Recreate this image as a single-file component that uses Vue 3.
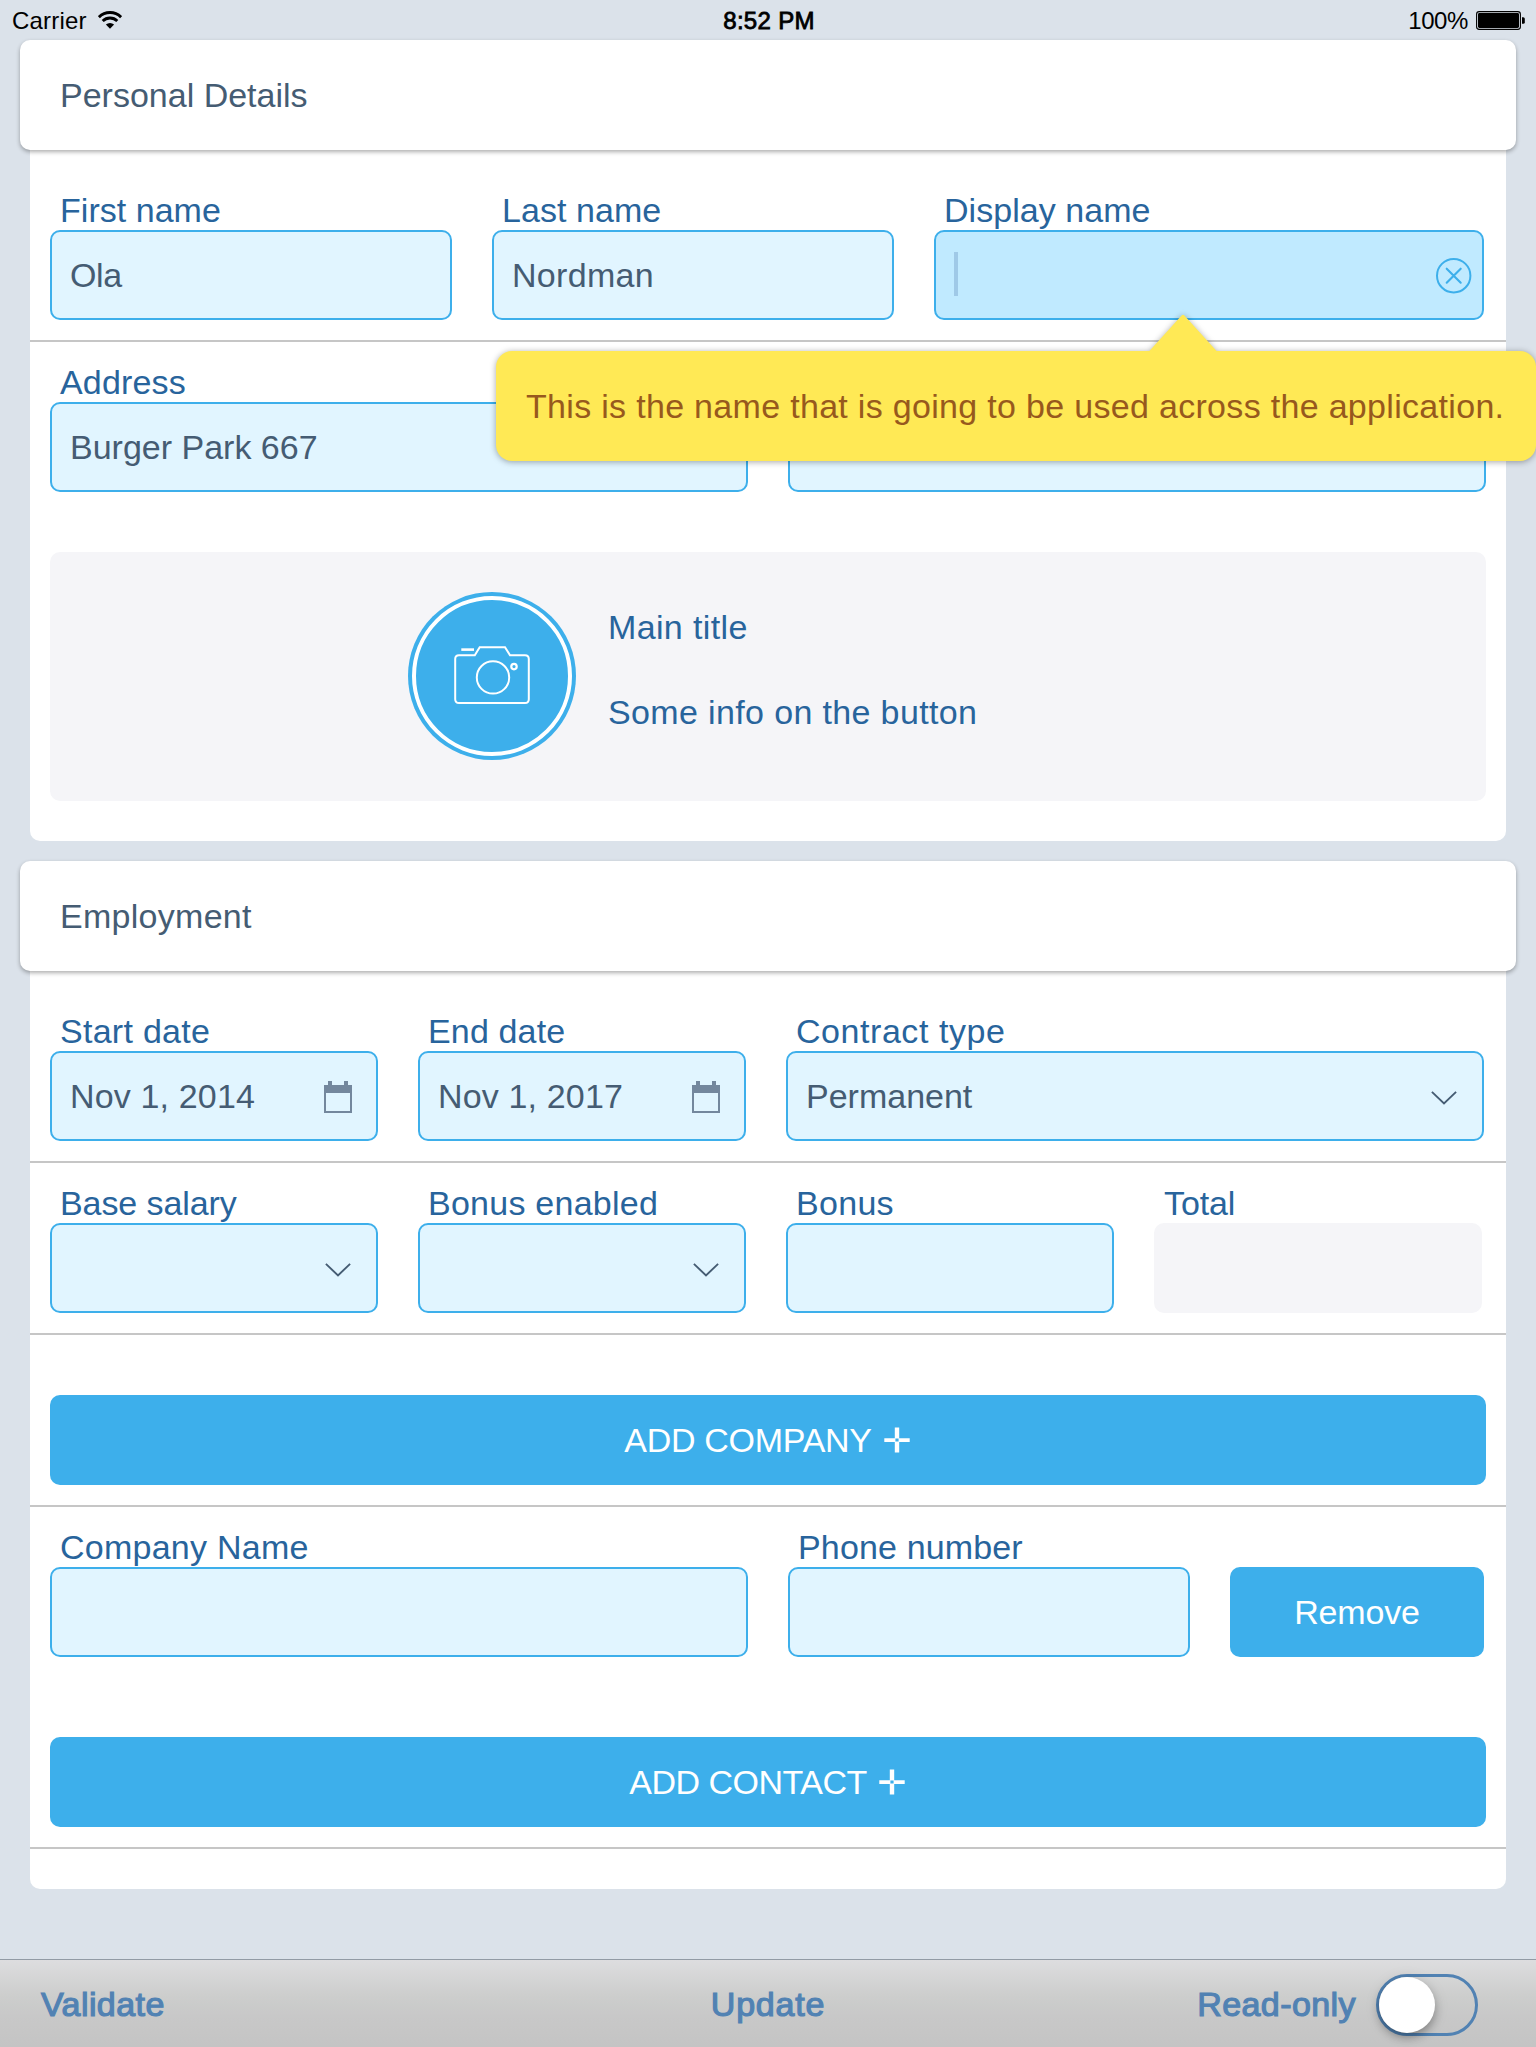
<script setup>
import { ref } from 'vue'

// ls / vls: tracking in px for a label and for its value
const sections = ref([
  {
    title: 'Personal Details',
    ls: 0,
    rows: [
      {
        divider: true,
        items: [
          { label: 'First name', ls: 0.03, value: 'Ola', vls: -0.4, width: 402 },
          { label: 'Last name', ls: 0.05, value: 'Nordman', vls: 0.3, width: 402 },
          {
            label: 'Display name',
            ls: 0.04,
            active: true,
            width: 550,
            tip: 'This is the name that is going to be used across the application.',
          },
        ],
      },
      {
        items: [
          { label: 'Address', value: 'Burger Park 667', vls: 0, width: 698 },
          { label: '', value: '', width: 698 },
        ],
      },
    ],
    picture: { title: 'Main title', info: 'Some info on the button' },
  },
  {
    title: 'Employment',
    ls: 0.28,
    rows: [
      {
        divider: true,
        items: [
          { label: 'Start date', ls: 0.28, value: 'Nov 1, 2014', icon: 'calendar', width: 328 },
          { label: 'End date', value: 'Nov 1, 2017', icon: 'calendar', width: 328 },
          { label: 'Contract type', ls: 0.55, value: 'Permanent', vls: 0, icon: 'chevron', width: 698 },
        ],
      },
      {
        divider: true,
        items: [
          { label: 'Base salary', ls: -0.08, icon: 'chevron', width: 328 },
          { label: 'Bonus enabled', ls: 0.25, icon: 'chevron', width: 328 },
          { label: 'Bonus', ls: 0.3, width: 328 },
          { label: 'Total', ls: -0.1, disabled: true, width: 328 },
        ],
      },
      { divider: true, items: [{ button: 'ADD COMPANY', ls: -0.3, plus: true, width: 1436 }] },
      {
        items: [
          { label: 'Company Name', ls: 0.25, width: 698 },
          { label: 'Phone number', width: 402 },
          { button: 'Remove', ls: -0.15, width: 254 },
        ],
      },
      { divider: true, items: [{ button: 'ADD CONTACT', ls: -0.5, plus: true, width: 1436 }] },
    ],
  },
])

const tracking = (v) => ({ letterSpacing: (v ?? 0.15) + 'px' })
</script>

<template>
  <div class="screen">
    <header class="status">
      <div class="status-side">
        <span>Carrier</span>
        <svg class="wifi" width="24" height="18" viewBox="0 0 24 18">
          <path d="M0.9 6.1 A15.8 15.8 0 0 1 23.1 6.1" fill="none" stroke="#000" stroke-width="2.9" />
          <path d="M4.7 10 A10.4 10.4 0 0 1 19.3 10" fill="none" stroke="#000" stroke-width="2.9" />
          <path d="M12 17.8 L7.9 13.6 A5.9 5.9 0 0 1 16.1 13.6 Z" fill="#000" />
        </svg>
      </div>
      <span class="clock">8:52 PM</span>
      <div class="status-side status-right">
        <span class="percent">100%</span>
        <svg class="battery" width="50" height="19" viewBox="0 0 50 19">
          <rect x="0.6" y="0.6" width="43.8" height="17.8" rx="2.6" fill="none" stroke="#000" stroke-width="1.1" />
          <rect x="2" y="2" width="41" height="15" rx="1.4" fill="#000" />
          <path d="M46 6.2 h1.2 a1.6 1.6 0 0 1 1.6 1.6 v3.4 a1.6 1.6 0 0 1 -1.6 1.6 h-1.2 z" fill="#000" />
        </svg>
      </div>
    </header>

    <section v-for="section in sections" :key="section.title" class="section">
      <h2 class="section-head" :style="tracking(section.ls)">{{ section.title }}</h2>
      <div class="section-body">
        <div v-for="(row, r) in section.rows" :key="r" class="row" :class="{ divider: row.divider }">
          <div v-for="(item, i) in row.items" :key="i" class="item" :style="{ width: item.width + 'px' }">
            <button v-if="item.button" class="action">
              <span :style="tracking(item.ls)">{{ item.button }}</span>
              <svg v-if="item.plus" class="plus" width="26" height="26" viewBox="0 0 26 26">
                <path d="M10.8 0.5 h4.4 v10.7 h10.5 v3.7 h-10.5 v10.6 h-4.4 v-10.6 h-10.5 v-3.7 h10.5z M11.4 11.6 v2.8 h3.2 v-2.8z" fill="#fff" fill-rule="evenodd" />
              </svg>
            </button>
            <template v-else>
              <label class="label" :style="tracking(item.ls)">{{ item.label }}</label>
              <div class="field" :class="{ active: item.active, disabled: item.disabled }">
                <i v-if="item.active" class="caret"></i>
                <span class="value" :style="tracking(item.vls)">{{ item.value }}</span>
                <svg v-if="item.icon === 'calendar'" class="icon calendar" width="28" height="32" viewBox="0 0 28 32">
                  <path d="M4 0h4v4h12v-4h4v4h4v28h-28v-28h4z M2 12v18h24v-18z" fill="#73879d" fill-rule="evenodd" />
                </svg>
                <svg v-if="item.icon === 'chevron'" class="icon chevron" width="28" height="16" viewBox="0 0 28 16">
                  <path d="M1.9 1.9 L14 13.4 L26.1 1.9" fill="none" stroke="#455c73" stroke-width="1.9" />
                </svg>
                <svg v-if="item.active" class="clear" width="36" height="36" viewBox="0 0 36 36">
                  <circle cx="17.7" cy="17.7" r="16.7" fill="none" stroke="#3dafeb" stroke-width="2" />
                  <path d="M10.7 10.7 L24.7 24.7 M24.7 10.7 L10.7 24.7" stroke="#3dafeb" stroke-width="2.1" stroke-linecap="round" />
                </svg>
                <div v-if="item.tip" class="tip">
                  <svg class="tip-arrow" width="70" height="39" viewBox="0 0 70 39">
                    <path d="M0.5 39 L33.6 2.6 Q35 1 36.4 2.6 L69.5 39 Z" fill="#ffe955" />
                  </svg>
                  <span>{{ item.tip }}</span>
                </div>
              </div>
            </template>
          </div>
        </div>

        <div v-if="section.picture" class="picture">
          <div class="ring">
            <svg width="78" height="60" viewBox="0 0 78 60" fill="none" stroke="#fff" stroke-width="2">
              <path d="M6 9.2 H21.8 L26.7 1.2 H52 L57 9.2 H72 Q75.8 9.2 75.8 13 V53.2 Q75.8 57 72 57 H6 Q2.2 57 2.2 53.2 V13 Q2.2 9.2 6 9.2 Z" />
              <path d="M8.3 3.6 H21" stroke-width="2.6" />
              <circle cx="40" cy="31.4" r="16.2" />
              <circle cx="61" cy="20.6" r="2.7" stroke-width="2.2" />
            </svg>
          </div>
          <div class="picture-text">
            <p>{{ section.picture.title }}</p>
            <p>{{ section.picture.info }}</p>
          </div>
        </div>
      </div>
    </section>

    <footer class="toolbar">
      <span class="tool">Validate</span>
      <span class="tool tool-center">Update</span>
      <div class="tool-right">
        <span class="tool">Read-only</span>
        <div class="switch"><i class="knob"></i></div>
      </div>
    </footer>
  </div>
</template>

<style>
html,
body {
  margin: 0;
  background: #dbe2ea;
  overflow: hidden;
}
</style>

<style scoped>
.screen {
  width: 1536px;
  height: 2047px;
  display: flex;
  flex-direction: column;
  background: #dbe2ea;
  overflow: hidden;
  font-family: "Liberation Sans", Arial, sans-serif;
  font-size: 34px;
  line-height: 38px;
  letter-spacing: 0.15px;
  color: #455c73;
}

.status {
  height: 40px;
  display: grid;
  grid-template-columns: 1fr auto 1fr;
  font-size: 24px;
  line-height: 28px;
  letter-spacing: 0.2px;
  color: #000;
  padding: 7px 10px 0 12px;
  box-sizing: border-box;
}
.status-side { display: flex; }
.status-right { justify-content: flex-end; }
.wifi { margin: 4px 0 0 11px; }
.battery { margin: 4px 0 0 8px; }
.percent { letter-spacing: -0.4px; }
.clock { -webkit-text-stroke: 0.8px #000; letter-spacing: 0.3px; }

.section { padding: 0 20px; margin-bottom: 20px; }
.section-head {
  position: relative;
  margin: 0;
  height: 110px;
  padding: 0 40px;
  display: flex;
  align-items: center;
  background: #fff;
  border-radius: 10px;
  box-shadow: 0 2px 4px rgba(0, 0, 0, 0.32);
  font-size: 34px;
  font-weight: 400;
}
.section-body {
  margin: 0 10px;
  padding: 20px 0 40px;
  background: #fff;
  border-radius: 0 0 10px 10px;
}
.row {
  display: flex;
  gap: 40px;
  padding: 21px 20px 20px;
}
.row.divider { border-bottom: 2px solid #c6c6c6; }
.item {
  flex: none;
  height: 129px;
  display: flex;
  flex-direction: column;
  justify-content: flex-end;
}
.label {
  height: 39px;
  padding-left: 10px;
  color: #28649c;
  white-space: nowrap;
}
.field {
  position: relative;
  box-sizing: border-box;
  height: 90px;
  padding: 0 0 0 18px;
  display: flex;
  align-items: center;
  border: 2px solid #3dafeb;
  border-radius: 10px;
  background: #e1f5ff;
}
.field.active { background: #c0eaff; }
.field.disabled { border-color: #f5f5f8; background: #f5f5f8; }
.value { flex: 1; }
.icon { margin-right: 24px; }
.calendar { margin-top: 2px; }
.chevron { margin-top: 3px; }
.clear { margin: 2px 10px 0 0; }
.caret {
  width: 4px;
  height: 44px;
  margin-top: -2px;
  background: #9fc9e7;
}

.tip {
  position: absolute;
  z-index: 5;
  right: -54px;
  top: 119px;
  width: 1040px;
  height: 110px;
  display: flex;
  align-items: center;
  box-sizing: border-box;
  padding-left: 30px;
  background: #ffe955;
  border-radius: 16px;
  color: #97591d;
  white-space: nowrap;
  letter-spacing: 0.31px;
  filter: drop-shadow(0 1px 3px rgba(0, 0, 0, 0.35));
}
.tip-arrow {
  position: absolute;
  left: 652px;
  top: -38px;
}

.action {
  height: 90px;
  width: 100%;
  padding: 0;
  display: flex;
  align-items: center;
  justify-content: center;
  gap: 12px;
  border: 0;
  border-radius: 10px;
  background: #3dafeb;
  color: #fff;
  font: inherit;
}
.plus { margin-right: 2px; }

.picture {
  height: 249px;
  margin: 40px 20px 0;
  box-sizing: border-box;
  padding: 40px 0 0 358px;
  display: flex;
  background: #f5f5f8;
  border-radius: 10px;
}
.ring {
  width: 152px;
  height: 152px;
  display: flex;
  align-items: center;
  justify-content: center;
  background: #3dafeb;
  border: 4px solid #fff;
  border-radius: 50%;
  margin: 4px;
  box-shadow: 0 0 0 4px #3dafeb;
}
.picture-text {
  padding: 16px 0 0 32px;
  color: #28649c;
  letter-spacing: 0.36px;
}
.picture-text p { margin: 0 0 47px; }

.toolbar {
  margin-top: auto;
  height: 88px;
  box-sizing: border-box;
  display: grid;
  grid-template-columns: 1fr auto 1fr;
  align-items: center;
  padding: 0 58px 0 41px;
  border-top: 1px solid #929ba5;
  background: linear-gradient(#dddddf 0%, #cdcecd 40%, #c8c8c8 65%, #c4c4c4 100%);
}
.tool {
  color: #5182b3;
  -webkit-text-stroke: 1.2px #5182b3;
  letter-spacing: 0.42px;
}
.tool-center {
  margin-left: 17px;
  letter-spacing: 0.8px;
}
.tool-right {
  display: flex;
  justify-content: flex-end;
  align-items: center;
  gap: 20px;
}
.switch {
  width: 102px;
  height: 62px;
  box-sizing: border-box;
  border: 3px solid #5182b3;
  border-radius: 31px;
  margin-top: 3px;
}
.knob {
  display: block;
  width: 56px;
  height: 56px;
  border-radius: 50%;
  background: #fff;
  box-shadow: 0 5px 8px rgba(0, 0, 0, 0.28), 0 2px 16px rgba(0, 0, 0, 0.1);
}
</style>
